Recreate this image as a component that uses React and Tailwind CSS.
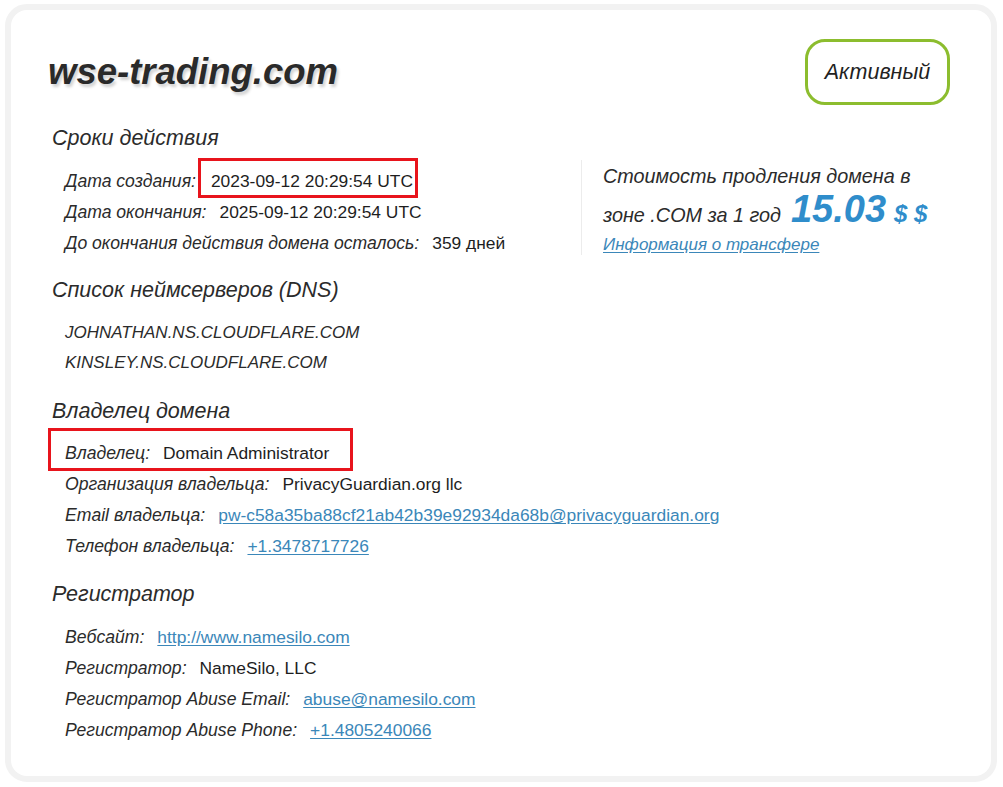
const font = "font-['Liberation_Sans',Arial,sans-serif]";

function Row({ label, children }) {
  return (
    <div className="flex h-[31px] items-center pl-[17px]">
      <span className="text-[17.6px] italic text-[#2b2b2b]">{label}</span>
      <span className="ml-[13px] text-[17.4px] text-[#1e1e1e]">{children}</span>
    </div>
  );
}

function A({ children }) {
  return (
    <a href="#" className="text-[#3b87b9] underline underline-offset-2">
      {children}
    </a>
  );
}

function Heading({ children, className = "" }) {
  return (
    <h2
      className={`pl-[4px] text-[21.5px] italic leading-[28px] text-[#2b2b2b] ${className}`}
    >
      {children}
    </h2>
  );
}

export default function App() {
  return (
    <div className={`min-h-[787px] bg-white pt-[4px] pl-[5px] ${font}`}>
      <div className="h-[778px] w-[992px] rounded-[22px] border-[6px] border-[#f2f2f2] bg-white pl-[37px] pr-[41px] pt-[29px]">
        <div className="flex items-center justify-between">
          <h1 className="text-[36.5px] font-bold italic leading-[44px] text-[#2a2a2a] [text-shadow:2px_3px_3px_rgba(0,0,0,0.18)]">
            wse-trading.com
          </h1>
          <div className="flex h-[66px] w-[145px] items-center justify-center rounded-[20px] border-[3px] border-[#8cbd2e] text-[21.5px] italic text-[#222]">
            Активный
          </div>
        </div>

        <div className="mt-[19px] flex">
          <div className="w-[533px]">
            <Heading className="mb-[14px]">Сроки действия</Heading>
            <div className="flex h-[31px] items-center pl-[17px]">
              <span className="text-[17.6px] italic text-[#2b2b2b]">Дата создания:</span>
              <span className="relative ml-[15px] text-[17.4px] text-[#1e1e1e]">
                2023-09-12 20:29:54 UTC
                <span className="absolute -left-[13px] -right-[5px] -top-[10px] -bottom-[3px] border-[3px] border-[#e8141c]" />
              </span>
            </div>
            <Row label="Дата окончания:">2025-09-12 20:29:54 UTC</Row>
            <Row label="До окончания действия домена осталось:">359 дней</Row>
          </div>
          <div className="mt-[36px] h-[95px] border-l border-[#ececec] pl-[21px]">
            <p className="text-[19.8px] italic leading-[33px] text-[#2b2b2b]">
              Стоимость продления домена в
            </p>
            <p className="flex items-baseline text-[19.8px] italic leading-[33px] text-[#2b2b2b]">
              зоне .COM за 1 год
              <span className="ml-[10px] text-[38px] font-bold text-[#2f8dcb]">15.03</span>
              <span className="ml-[8px] text-[24px] font-bold text-[#2f8dcb]">$ $</span>
            </p>
            <a href="#" className="text-[17px] italic leading-[26px] text-[#3b87b9] underline underline-offset-2">
              Информация о трансфере
            </a>
          </div>
        </div>

        <Heading className="mb-[14px] mt-[17px]">Список неймсерверов (DNS)</Heading>
        <div className="pl-[17px] text-[17px] italic leading-[30px] text-[#2b2b2b]">
          <div>JOHNATHAN.NS.CLOUDFLARE.COM</div>
          <div>KINSLEY.NS.CLOUDFLARE.COM</div>
        </div>

        <Heading className="mb-[13px] mt-[19px]">Владелец домена</Heading>
        <div className="relative w-fit">
          <Row label="Владелец:">Domain Administrator</Row>
          <span className="absolute -left-[0px] -right-[24px] -top-[10px] -bottom-[2px] border-[3px] border-[#e8141c]" />
        </div>
        <Row label="Организация владельца:">PrivacyGuardian.org llc</Row>
        <Row label="Email владельца:">
          <A>pw-c58a35ba88cf21ab42b39e92934da68b@privacyguardian.org</A>
        </Row>
        <Row label="Телефон владельца:">
          <A>+1.3478717726</A>
        </Row>

        <Heading className="mb-[14px] mt-[18px]">Регистратор</Heading>
        <Row label="Вебсайт:">
          <A>http://www.namesilo.com</A>
        </Row>
        <Row label="Регистратор:">NameSilo, LLC</Row>
        <Row label="Регистратор Abuse Email:">
          <A>abuse@namesilo.com</A>
        </Row>
        <Row label="Регистратор Abuse Phone:">
          <A>+1.4805240066</A>
        </Row>
      </div>
    </div>
  );
}
